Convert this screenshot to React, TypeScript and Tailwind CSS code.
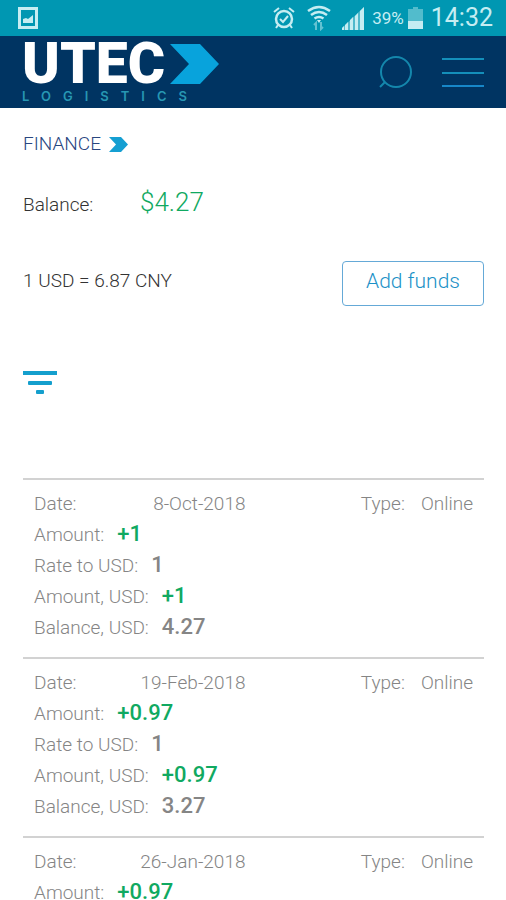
import React from "react";

interface Transaction {
  date: string;
  type: string;
  amount: string;
  rate: string;
  amountUsd: string;
  balanceUsd: string;
}

const transactions: Transaction[] = [
  { date: "8-Oct-2018", type: "Online", amount: "+1", rate: "1", amountUsd: "+1", balanceUsd: "4.27" },
  { date: "19-Feb-2018", type: "Online", amount: "+0.97", rate: "1", amountUsd: "+0.97", balanceUsd: "3.27" },
  { date: "26-Jan-2018", type: "Online", amount: "+0.97", rate: "1", amountUsd: "+0.97", balanceUsd: "2.30" },
];

const StatusBar: React.FC = () => (
  <div className="flex h-9 items-center bg-[#0097b2] pl-[18px] pr-[13px] font-normal text-[#c5edf2]">
    <svg className="h-[22px] w-5" viewBox="0 0 20 22" aria-hidden="true">
      <path d="M0 0h20v22H0zM3 3v16h14V3z" fill="currentColor" fillRule="evenodd" />
      <path d="M5 16v-4l3-1 2 1 5-4v8z" fill="currentColor" />
    </svg>

    <div className="ml-auto flex items-center">
      {/* Alarm */}
      <svg className="h-[22px] w-[22px]" viewBox="0 0 22 22" fill="none" stroke="currentColor" strokeWidth="2.500" aria-hidden="true">
        <circle cx="11" cy="12" r="8" />
        <path d="M7 12l3 3 5-6M1 5l5-4M21 5l-5-4M5 18l-2 3M17 18l2 3" strokeWidth="2" />
      </svg>
      {/* Wi-Fi */}
      <svg className="ml-3 h-[26px] w-6" viewBox="0 0 24 26" fill="none" stroke="currentColor" strokeWidth="2.500" aria-hidden="true">
        <path d="M1 6q11-8 22 0M4 10q8-6 16 0M7.500 13.500q4.500-3 9 0" />
        <path d="M10 15h4l-2 3z" fill="currentColor" stroke="none" />
        <path d="M9 25v-7l-2 2M14 17v7l2-2" strokeWidth="2" opacity=".5" />
      </svg>
      {/* Signal */}
      <svg className="ml-[11px] h-[23px] w-[22px]" viewBox="0 0 22 23" fill="currentColor" aria-hidden="true">
        <path d="M0 23v-2l2-2v4zM3 23v-5l3-3v8zM8 23v-10l3-3v13zM13 23V9l3-3v17zM18 23V4l4-4v23z" />
        <path d="M0 21L22 0v23H0z" opacity=".4" />
      </svg>
      <span className="ml-2 font-[Roboto] text-[17px] leading-6">39%</span>
      {/* Battery */}
      <svg className="ml-1 h-[22px] w-[15px]" viewBox="0 0 15 22" aria-hidden="true">
        <path d="M5 0h5v2h5v13H0V2h5z" fill="#52bccc" />
        <path d="M0 14h15v8H0z" fill="currentColor" />
      </svg>
      <span className="ml-2 font-[Roboto] text-[25px] leading-9">14:32</span>
    </div>
  </div>
);

const Header: React.FC = () => (
  <header className="flex h-[72px] items-start justify-between bg-[#003462] px-[22px]">
    <a href="#home" className="block pt-2">
      <span className="flex items-center gap-[5px]">
        <span className="font-[Roboto] text-[57px] font-black leading-10 text-white">UTEC</span>
        <svg className="h-10 w-[49px]" viewBox="0 0 49 40" fill="#08a3dc" aria-hidden="true">
          <path d="M0 0h30l19 20-19 20H0l19-20z" />
        </svg>
      </span>
      <span className="mt-1 block font-[Inter] text-[13px] font-semibold leading-4 tracking-[12px] text-[#2797b3]">
        LOGISTICS
      </span>
    </a>

    <div className="flex items-center gap-[30px] pt-[19px]">
      <button type="button" aria-label="Search">
        <svg className="block h-[34px] w-[34px]" viewBox="0 0 34 34" fill="none" stroke="#1487ac" strokeWidth="2">
          <circle cx="18" cy="17" r="15" />
          <path d="M7 27l-5 5" />
        </svg>
      </button>
      <button type="button" aria-label="Menu">
        <svg className="block h-[34px] w-[42px]" viewBox="0 0 42 34" fill="none" stroke="#148fba" strokeWidth="2">
          <path d="M0 4h42M0 18h42" />
          <path d="M0 31h42" stroke="#1787c8" />
        </svg>
      </button>
    </div>
  </header>
);

const Field: React.FC<{ label: string; value: string; positive?: boolean }> = ({ label, value, positive }) => (
  <div className="flex h-[31px] items-baseline gap-[13px]">
    <dt>{label}</dt>
    <dd className={`text-[22px] font-medium leading-7 ${positive ? "text-[#10a961]" : "text-[#858585]"}`}>
      {value}
    </dd>
  </div>
);

const TransactionItem: React.FC<{ item: Transaction }> = ({ item }) => (
  <li className="border-t-2 border-[#d2d2d2] px-[11px] pb-[14px] pt-2">
    <dl className="text-[19px] leading-[31px] text-[#858585]">
      <div className="flex">
        <div className="flex w-1/2 justify-between pr-2">
          <dt>Date:</dt>
          <dd>{item.date}</dd>
        </div>
        <div className="flex w-1/2 justify-end gap-4">
          <dt>Type:</dt>
          <dd>{item.type}</dd>
        </div>
      </div>
      <Field label="Amount:" value={item.amount} positive />
      <Field label="Rate to USD:" value={item.rate} />
      <Field label="Amount, USD:" value={item.amountUsd} positive />
      <Field label="Balance, USD:" value={item.balanceUsd} />
    </dl>
  </li>
);

const App: React.FC = () => (
  <div className="h-screen overflow-y-auto bg-white font-[Roboto,sans-serif] font-light [scrollbar-width:none]">
    <StatusBar />
    <Header />

    <main className="pl-[23px] pr-[22px] pt-5">
      <h1 className="flex items-center gap-2 text-[19px] leading-8 text-[#29467f]">
        FINANCE
        <svg className="h-[15px] w-[19px]" viewBox="0 0 19 15" fill="#159fd2" aria-hidden="true">
          <path d="M0 0h12l7 7.500-7 7.500H0l7-7.500z" />
        </svg>
      </h1>

      <div className="mt-[22px] flex items-baseline text-[19px] leading-10 text-[#333]">
        <span className="w-[117px]">Balance:</span>
        <span className="text-[26px] text-[#10a961]">$4.27</span>
      </div>

      <div className="mt-9 flex items-start justify-between">
        <span className="text-[19px] leading-10 text-[#333]">1 USD = 6.87 CNY</span>
        <button
          type="button"
          className="h-[45px] w-[142px] rounded border border-[#65a9d7] pb-1 text-[21px] text-[#1c91c7]"
        >
          Add funds
        </button>
      </div>

      <button type="button" aria-label="Filter" className="mt-[65px] block">
        <svg className="block h-6 w-[34px]" viewBox="0 0 34 24" fill="#149fcd">
          <rect width="34" height="4" />
          <rect x="5" y="10" width="24" height="4" rx="1" />
          <rect x="13" y="19" width="8" height="4" rx="1" />
        </svg>
      </button>

      <ul className="mt-[83px]">
        {transactions.map(item => (
          <TransactionItem key={item.date} item={item} />
        ))}
      </ul>
    </main>
  </div>
);

export default App;
